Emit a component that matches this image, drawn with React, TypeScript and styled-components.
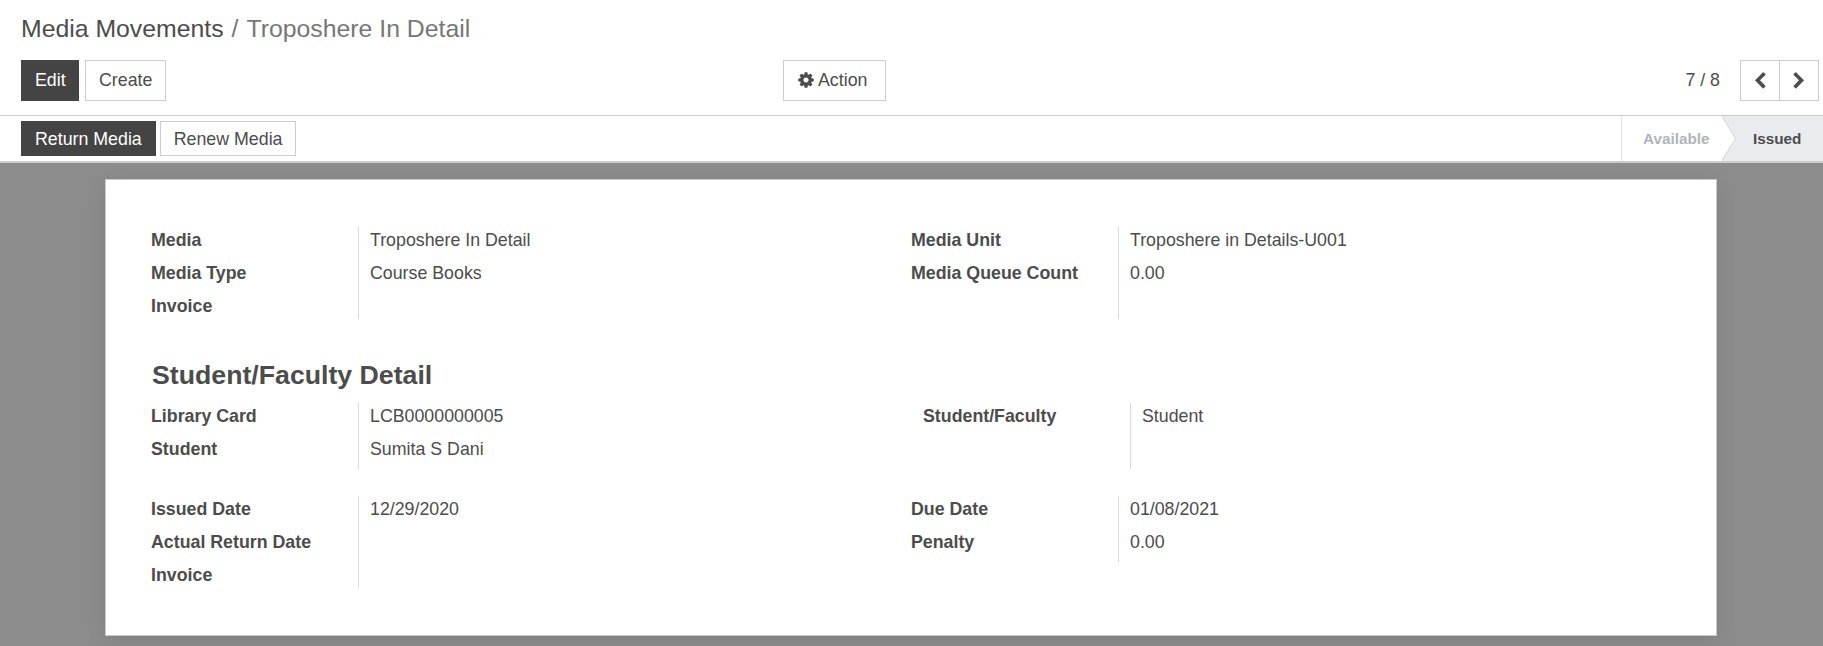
import React from "react";
import styled, { createGlobalStyle } from "styled-components";

const Global = createGlobalStyle`
  html, body { margin: 0; padding: 0; height: 100%; }
  body { font-family: "Liberation Sans", Arial, sans-serif; color: #4c4c4c; background: #8c8c8c; font-size: 17.8px; }
  #root { height: 100%; }
`;

const Page = styled.div`
  width: 1823px; height: 646px; overflow: hidden; display: flex; flex-direction: column;
  background: #8c8c8c;
`;
const ControlPanel = styled.header`
  flex: none; height: 115px; box-sizing: content-box; background: #fff; border-bottom: 1px solid #ccc;
`;
const PanelInner = styled.div`
  padding: 12px 4px 0 21px;
`;
const Breadcrumb = styled.div`
  height: 34px; display: flex; align-items: center; font-size: 24.8px; color: #4c4c4c; gap: 8px;
`;
const Current = styled.span` color: #777; `;
const Slash = styled.span` color: #777; `;
const ActionRow = styled.div`
  display: grid; grid-template-columns: 762px 1fr auto; margin-top: 14px; align-items: center;
`;
const Group = styled.div`
  display: flex; align-items: center; gap: 6px;
`;
const Button = styled.button<{ $primary?: boolean }>`
  height: 41px; padding: 0 13px; box-sizing: border-box;
  display: inline-flex; align-items: center; gap: 3px;
  font: inherit; font-size: 17.8px; border-radius: 0; cursor: pointer;
  border: 1px solid ${(p) => (p.$primary ? "#444" : "#ccc")};
  background: ${(p) => (p.$primary ? "#444" : "#fff")};
  color: ${(p) => (p.$primary ? "#fff" : "#4c4c4c")};
`;
const EditButton = styled(Button)`
  width: 58px;
`;
const StatusButton = styled(Button)`
  height: 35px; padding-top: 2px;
`;
const ActionButton = styled(Button)`
  padding: 0 18px 0 13px;
`;
const ActionIcon = styled.span`
  display: flex; margin-bottom: 2px;
`;
const Pager = styled.div` display: flex; align-items: center; `;
const PagerText = styled.span` margin-right: 20px; font-size: 17.8px; `;
const PagerBtn = styled.button<{ $first?: boolean }>`
  width: ${(p) => (p.$first ? 40 : 39)}px; height: 41px; box-sizing: border-box; padding: 0;
  display: flex; align-items: center; justify-content: center;
  background: #fff; border: 1px solid #ccc; border-left: ${(p) => (p.$first ? "1px solid #ccc" : "none")};
  color: #4c4c4c;
`;
const StatusBar = styled.div`
  height: 45px; flex: none; background: #fff; border-bottom: 2px solid #ccc;
  display: flex; justify-content: space-between; align-items: stretch; padding-left: 21px;
`;
const StatusButtons = styled.div` display: flex; align-items: center; gap: 4px; `;
const Steps = styled.div` display: flex; align-items: stretch; `;
const Step = styled.div<{ $active?: boolean }>`
  position: relative; display: flex; align-items: center; box-sizing: border-box;
  font-weight: bold; font-size: 15.3px;
  ${(p) => p.$active
    ? `width: 101px; padding-left: 31px; background: #e9ecef; color: #4c4c4c;`
    : `width: 101px; padding-left: 21px; border-left: 1px solid #dee2e6; background: #fff; color: #adb5bd;`}
  ${(p) => p.$active && `
    &::before, &::after { content: ""; position: absolute; top: 0; bottom: 0; width: 14px;
      clip-path: polygon(0 0, 100% 50%, 0 100%); }
    &::before { left: 0; background: #d3d7db; }
    &::after { left: -1px; background: #fff; }
  `}
`;
const Sheet = styled.main`
  width: 1612px; margin: 16px 0 0 105px; box-sizing: border-box; background: #fff;
  padding: 47px 45px 47px; border: 1px solid #c8c8d0; box-shadow: 0 5px 20px -1px rgba(0,0,0,.1);
  flex: none;
`;
const TwoCols = styled.div<{ $mt?: number }>`
  display: grid; grid-template-columns: 760px 1fr; margin-top: ${(p) => p.$mt ?? 0}px;
`;
const Field = styled.div<{ $inset?: number }>`
  display: grid; grid-template-columns: 208px 1fr; align-self: start;
  margin-left: ${(p) => p.$inset ?? 0}px;
`;
const Label = styled.div<{ $tight?: boolean }>`
  height: ${(p) => (p.$tight ? 26 : 33)}px; box-sizing: border-box; line-height: 26px;
  font-weight: bold; border-right: 1px solid #d9d9d9;
`;
const Value = styled.div<{ $tight?: boolean }>`
  height: ${(p) => (p.$tight ? 26 : 33)}px; box-sizing: border-box; line-height: 26px;
  padding-left: 11px;
`;
const Heading = styled.h1`
  margin: 35px 0 7px 1px; height: 42px; line-height: 42px; font-size: 26.7px; font-weight: bold; color: #4c4c4c;
`;

const Glyph = ({ d, size }: { d: string; size: number }) => (
  <svg width={size} height={size} viewBox="0 0 1792 1792" fill="currentColor" aria-hidden="true">
    <path d={d} />
  </svg>
);
const COG = "M1152 896q0-106-75-181t-181-75-181 75-75 181 75 181 181 75 181-75 75-181zm512-109v222q0 12-8 23t-20 13l-185 28q-19 54-39 91 35 50 107 138 10 12 10 25t-9 23q-27 37-99 108t-94 71q-12 0-26-9l-138-108q-44 23-91 38-16 136-29 186-7 28-36 28h-222q-14 0-24.5-8.5t-11.5-21.5l-28-184q-49-16-90-37l-141 107q-10 9-25 9-14 0-25-11-126-114-165-168-7-10-7-23 0-12 8-23 15-21 51-66.5t54-70.5q-27-50-41-99l-183-27q-13-2-21-12.5t-8-23.5v-222q0-12 8-23t19-13l186-28q14-46 39-92-40-57-107-138-10-12-10-24 0-10 9-23 26-36 98.5-107.5t94.5-71.5q13 0 26 10l138 107q44-23 91-38 16-136 29-186 7-28 36-28h222q14 0 24.5 8.5t11.5 21.5l28 184q49 16 90 37l142-107q9-9 24-9 13 0 25 10 129 119 165 170 7 8 7 22 0 12-8 23-15 21-51 66.5t-54 70.5q26 50 41 98l183 28q13 2 21 12.5t8 23.5z";
const LEFT = "M1427 301l-531 531 531 531q19 19 19 45t-19 45l-166 166q-19 19-45 19t-45-19l-742-742q-19-19-19-45t19-45l742-742q19-19 45-19t45 19l166 166q19 19 19 45t-19 45z";
const RIGHT = "M1363 877l-742 742q-19 19-45 19t-45-19l-166-166q-19-19-19-45t19-45l531-531-531-531q-19-19-19-45t19-45l166-166q19-19 45-19t45 19l742 742q19 19 19 45t-19 45z";

type R = [string, string, boolean?];
const Fields = ({ rows, inset }: { rows: R[]; inset?: number }) => (
  <Field $inset={inset}>
    {rows.map(([l, v, t], i) => (
      <React.Fragment key={i}>
        <Label $tight={t}>{l}</Label>
        <Value $tight={t}>{v}</Value>
      </React.Fragment>
    ))}
  </Field>
);

export default function App() {
  return (
    <Page>
      <Global />
      <ControlPanel>
        <PanelInner>
          <Breadcrumb>
            <span>Media Movements</span>
            <Slash>/</Slash>
            <Current>Troposhere In Detail</Current>
          </Breadcrumb>
          <ActionRow>
            <Group>
              <EditButton $primary>Edit</EditButton>
              <Button>Create</Button>
            </Group>
            <Group>
              <ActionButton><ActionIcon><Glyph d={COG} size={18} /></ActionIcon>Action</ActionButton>
            </Group>
            <Pager>
              <PagerText>7 / 8</PagerText>
              <PagerBtn $first><Glyph d={LEFT} size={18} /></PagerBtn>
              <PagerBtn><Glyph d={RIGHT} size={18} /></PagerBtn>
            </Pager>
          </ActionRow>
        </PanelInner>
      </ControlPanel>
      <StatusBar>
        <StatusButtons>
          <StatusButton $primary>Return Media</StatusButton>
          <StatusButton>Renew Media</StatusButton>
        </StatusButtons>
        <Steps>
          <Step>Available</Step>
          <Step $active>Issued</Step>
        </Steps>
      </StatusBar>
      <Sheet>
        <TwoCols>
          <Fields rows={[["Media", "Troposhere In Detail"], ["Media Type", "Course Books"], ["Invoice", "", true]]} />
          <Fields rows={[["Media Unit", "Troposhere in Details-U001"], ["Media Queue Count", "0.00"], ["", "", true]]} />
        </TwoCols>
        <Heading>Student/Faculty Detail</Heading>
        <TwoCols>
          <Fields rows={[["Library Card", "LCB0000000005"], ["Student", "Sumita S Dani"]]} />
          <Fields inset={12} rows={[["Student/Faculty", "Student"], ["", ""]]} />
        </TwoCols>
        <TwoCols $mt={27}>
          <Fields rows={[["Issued Date", "12/29/2020"], ["Actual Return Date", ""], ["Invoice", "", true]]} />
          <Fields rows={[["Due Date", "01/08/2021"], ["Penalty", "0.00"]]} />
        </TwoCols>
      </Sheet>
    </Page>
  );
}
